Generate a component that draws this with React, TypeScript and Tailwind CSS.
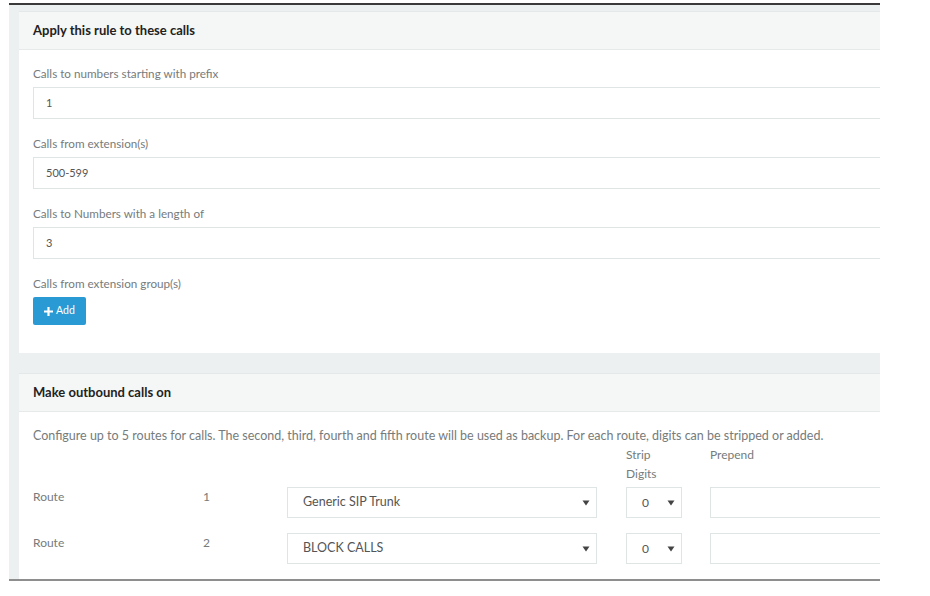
import React from "react";

const Arrow = () => (
  <svg width="8" height="6" viewBox="0 0 8 6" className="shrink-0">
    <path d="M0.5 0.5 L7.5 0.5 L4 5.5 Z" fill="#444" />
  </svg>
);

function Field({ label, value }: { label: string; value: string }) {
  return (
    <div className="flex flex-col">
      <div className="h-[18px] leading-[18px] text-[11.7px] text-[#767b7c]">{label}</div>
      <div className="mt-[5px] h-[32px] w-[880px] border border-[#dfe4e4] bg-white flex items-center pl-[12px] text-[11px] text-[#555]">
        {value}
      </div>
    </div>
  );
}

function RouteRow({ n, trunk, blank }: { n: string; trunk: string; blank?: boolean }) {
  return (
    <div className="flex items-start h-[31px] text-[12px] text-[#767b7c]">
      <div className="w-[170px] pt-[1px] leading-[18px]">{blank ? "" : "Route"}</div>
      <div className="w-[84px] pt-[1px] leading-[18px]">{n}</div>
      <div className="w-[310px] h-[31px] border border-[#dfe4e4] bg-white flex items-center justify-between pl-[15px] pr-[6px] text-[12.5px] text-[#555]">
        <span>{trunk}</span>
        {!blank && <Arrow />}
      </div>
      <div className="w-[29px]" />
      <div className="w-[56px] h-[31px] border border-[#dfe4e4] bg-white flex items-center justify-between pl-[15px] pr-[6px] text-[#555]">
        <span>{blank ? "" : "0"}</span>
        {!blank && <Arrow />}
      </div>
      <div className="w-[28px]" />
      <div className="w-[200px] h-[31px] border border-[#dfe4e4] bg-white" />
    </div>
  );
}

export default function App() {
  return (
    <div
      className="w-[930px] h-[596px] bg-white overflow-hidden"
      style={{ fontFamily: "Lato, 'Open Sans', sans-serif" }}
    >
      <div className="h-[3px]" />
      <div className="ml-[9px] w-[871px] h-[578px] border-t-[2px] border-t-[#3a3a3a] border-b-[2px] border-b-[#8e8e8e] bg-[#edf0f0] overflow-hidden">
        <div className="pl-[10px] pt-[6px]">
          {/* Card 1 */}
          <div className="w-[900px] bg-white border-t border-[#e4e8e8]">
            <div className="h-[38px] bg-[#f5f6f6] border-b border-[#e6eaea] flex items-center pl-[14px] text-[13px] font-bold text-[#222]">
              Apply this rule to these calls
            </div>
            <div className="pl-[14px] pt-[14px] pb-[28px] flex flex-col gap-[15px]">
              <Field label="Calls to numbers starting with prefix" value="1" />
              <Field label="Calls from extension(s)" value="500-599" />
              <Field label="Calls to Numbers with a length of" value="3" />
              <div className="flex flex-col">
                <div className="h-[18px] leading-[18px] text-[11.7px] text-[#767b7c]">Calls from extension group(s)</div>
                <div className="mt-[5px] h-[28px] w-[53px] rounded-[2px] bg-[#2a9ad5] flex items-center justify-center gap-[3px] text-white text-[10.5px]">
                  <svg width="9" height="9" viewBox="0 0 9 9">
                    <path d="M3.4 0 H5.6 V3.4 H9 V5.6 H5.6 V9 H3.4 V5.6 H0 V3.4 H3.4 Z" fill="#fff" />
                  </svg>
                  <span>Add</span>
                </div>
              </div>
            </div>
          </div>
          {/* Card 2 */}
          <div className="mt-[20px] w-[900px] bg-white border-t border-[#e4e8e8]">
            <div className="h-[38px] bg-[#f5f6f6] border-b border-[#e6eaea] flex items-center pl-[14px] text-[13px] font-bold text-[#222]">
              Make outbound calls on
            </div>
            <div className="pl-[14px] pt-[15px]">
              <div className="h-[18px] leading-[18px] text-[12.5px] text-[#767b7c] whitespace-nowrap">
                Configure up to 5 routes for calls. The second, third, fourth and fifth route will be used as backup. For each route, digits can be stripped or added.
              </div>
              <div className="flex text-[12px] text-[#767b7c] leading-[19px] h-[42px]">
                <div className="w-[593px]" />
                <div className="w-[84px]">Strip<br />Digits</div>
                <div>Prepend</div>
              </div>
              <div className="flex flex-col gap-[15px]">
                <RouteRow n="1" trunk="Generic SIP Trunk" />
                <RouteRow n="2" trunk="BLOCK CALLS" />
                <RouteRow n="" trunk="" blank />
              </div>
            </div>
          </div>
        </div>
      </div>
    </div>
  );
}
